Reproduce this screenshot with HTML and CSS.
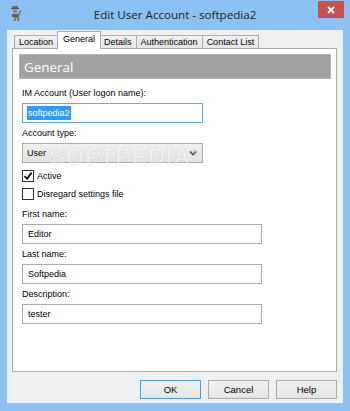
FILE: index.html
```html
<!DOCTYPE html>
<html lang="en">

<head>
  <meta charset="UTF-8" />
  <title>Edit User Account - softpedia2</title>
  <link rel="stylesheet" href="styles.css">
</head>

<body>
  <div class="window">
    <div class="titlebar">
      <svg class="app-icon" width="14" height="16" viewBox="0 0 14 16">
        <rect x="3" y="1" width="6" height="2" fill="#6b6b6b" />
        <rect x="2" y="3" width="8" height="1" fill="#555" />
        <circle cx="6" cy="6" r="2.2" fill="#8a8a8a" />
        <path d="M3 9 h6 l2 -4 l1.5 0.8 l-2.3 5.2 v5 h-2.2 v-3 h-1 v3 h-2.2 v-5 z" fill="#7a7a7a" />
        <rect x="3" y="9" width="6" height="3" fill="#5e5e5e" />
      </svg>
      <div class="title">Edit User Account - softpedia2</div>
      <div class="close">
        <svg width="8" height="8" viewBox="0 0 8 8">
          <path d="M1 1 L7 7 M7 1 L1 7" stroke="#fff" stroke-width="1.8" />
        </svg>
      </div>
    </div>

    <div class="client">
      <div class="tabs">
        <span class="tab">Location</span>
        <span class="tab active">General</span>
        <span class="tab">Details</span>
        <span class="tab">Authentication</span>
        <span class="tab">Contact List</span>
      </div>

      <div class="panel">
        <div class="panel-head">General</div>

        <div class="form">
          <div class="field">
            <label>IM Account (User logon name):</label>
            <div class="input small focus"><span class="sel">softpedia2</span></div>
          </div>
          <div class="field">
            <label>Account type:</label>
            <div class="combo small">
              <span>User</span>
              <svg width="8" height="6" viewBox="0 0 8 6">
                <path d="M1 1.5 L4 4.5 L7 1.5" fill="none" stroke="#333" stroke-width="1.6" />
              </svg>
            </div>
          </div>

          <div class="checks">
            <div class="check">
              <span class="box">
                <svg width="10" height="10" viewBox="0 0 10 10">
                  <path d="M1.5 5 L4 7.8 L8.6 1.6" fill="none" stroke="#111" stroke-width="1.8" />
                </svg>
              </span>
              Active
            </div>
            <div class="check"><span class="box"></span>Disregard settings file</div>
          </div>

          <div class="field">
            <label>First name:</label>
            <div class="input">Editor</div>
          </div>
          <div class="field">
            <label>Last name:</label>
            <div class="input">Softpedia</div>
          </div>
          <div class="field">
            <label>Description:</label>
            <div class="input">tester</div>
          </div>
        </div>

        <div class="watermark">SOFTPEDIA<sup>®</sup></div>
      </div>

      <div class="buttons">
        <button class="default">OK</button>
        <button>Cancel</button>
        <button>Help</button>
      </div>
    </div>
  </div>
</body>

</html>
```

FILE: styles.css
```css
:root {
  --frame: #8dc1f2;
  --face: #f0f0f0;
  --edge: #acacac;
  --field: #abadb3;
}

html,
body {
  margin: 0;
  padding: 0;
}

body {
  font-family: "Liberation Sans", Arial, sans-serif;
  font-size: 9px;
  color: #000;
}

.window {
  width: 350px;
  height: 411px;
  box-sizing: border-box;
  background-color: var(--frame);
  padding: 0 7px 8px 7px;
  display: flex;
  flex-direction: column;
}

.titlebar {
  height: 30px;
  display: grid;
  grid-template-columns: 1fr auto 1fr;
  align-items: start;
}

.app-icon {
  margin: 5px 0 0 2px;
}

.title {
  font-family: "Open Sans", "Liberation Sans", sans-serif;
  font-size: 11.6px;
  color: #222;
  line-height: 29px;
}

.close {
  justify-self: end;
  width: 26px;
  height: 17px;
  margin-top: 1px;
  margin-right: -1px;
  background-color: #c75050;
  display: flex;
  align-items: center;
  justify-content: center;
}

.client {
  flex: 1;
  background-color: var(--face);
  padding: 2px 6px 0 5px;
  display: flex;
  flex-direction: column;
}

/* tabs */
.tabs {
  display: flex;
  align-items: flex-end;
  padding-left: 2px;
  height: 16px;
  position: relative;
  z-index: 1;
}

.tab {
  height: 12px;
  line-height: 12px;
  padding: 0 4px;
  border: 1px solid var(--edge);
  border-bottom: none;
  margin-left: -1px;
  background: linear-gradient(#f2f2f2, #e6e6e6);
  white-space: nowrap;
}

.tab:first-child {
  margin-left: 0;
}

.tab.active {
  height: 17px;
  line-height: 14px;
  margin: 0 -2px -1px -1px;
  padding: 0 5px;
  background: #fff;
  position: relative;
  z-index: 2;
}

.tab.active + .tab {
  margin-left: 0;
}

.panel {
  height: 324px;
  box-sizing: border-box;
  border: 1px solid var(--edge);
  background-color: #fff;
  padding: 5px 5px 0 6px;
  position: relative;
}

.panel-head {
  height: 25px;
  line-height: 24px;
  box-sizing: border-box;
  background-color: #a2a2a2;
  border: 1px solid #b4b4b4;
  color: #fff;
  font-family: "Open Sans", "Liberation Sans", sans-serif;
  font-size: 13.4px;
  padding-left: 4px;
}

.form {
  margin: 8px 0 0 3px;
  display: flex;
  flex-direction: column;
}

.field {
  display: flex;
  flex-direction: column;
  margin-bottom: 4px;
}

.field label {
  line-height: 13px;
  margin-bottom: 3px;
}

.input {
  width: 240px;
  height: 20px;
  box-sizing: border-box;
  border: 1px solid var(--field);
  background-color: #fff;
  line-height: 18px;
  padding-left: 5px;
}

.input.small {
  width: 181px;
}

.input.focus {
  border-color: #6ba7e8;
  padding-left: 4px;
}

.sel {
  background-color: #3399ff;
  color: #fff;
  padding: 2px 1px;
}

.combo {
  width: 181px;
  height: 20px;
  box-sizing: border-box;
  border: 1px solid var(--edge);
  background: linear-gradient(#f0f0f0, #e3e3e3);
  display: flex;
  align-items: center;
  justify-content: space-between;
  padding: 0 5px 0 4px;
}

.checks {
  margin-top: 2px;
  display: flex;
  flex-direction: column;
  gap: 4px;
  margin-bottom: 7px;
}

.check {
  height: 14px;
  display: flex;
  align-items: center;
  gap: 3px;
}

.box {
  width: 12px;
  height: 12px;
  box-sizing: border-box;
  border: 1px solid #333;
  background-color: #fff;
  display: flex;
  align-items: center;
  justify-content: center;
}

.watermark {
  position: absolute;
  left: 36px;
  top: 94px;
  font-family: "Liberation Sans", sans-serif;
  font-weight: bold;
  font-size: 24px;
  letter-spacing: 0.5px;
  color: rgba(255, 255, 255, 0.35);
  -webkit-text-stroke: 1px rgba(150, 150, 150, 0.16);
  pointer-events: none;
}

.watermark sup {
  font-size: 9px;
}

/* bottom buttons */
.buttons {
  display: flex;
  justify-content: flex-end;
  gap: 7px;
  margin-top: 8px;
}

.buttons button {
  width: 61px;
  height: 19px;
  box-sizing: border-box;
  border: 1px solid var(--edge);
  background: linear-gradient(#f0f0f0, #e5e5e5);
  font-family: "Liberation Sans", Arial, sans-serif;
  font-size: 9.5px;
  color: #000;
  padding: 0;
}

.buttons button.default {
  border-color: #4c9ce3;
}
```
